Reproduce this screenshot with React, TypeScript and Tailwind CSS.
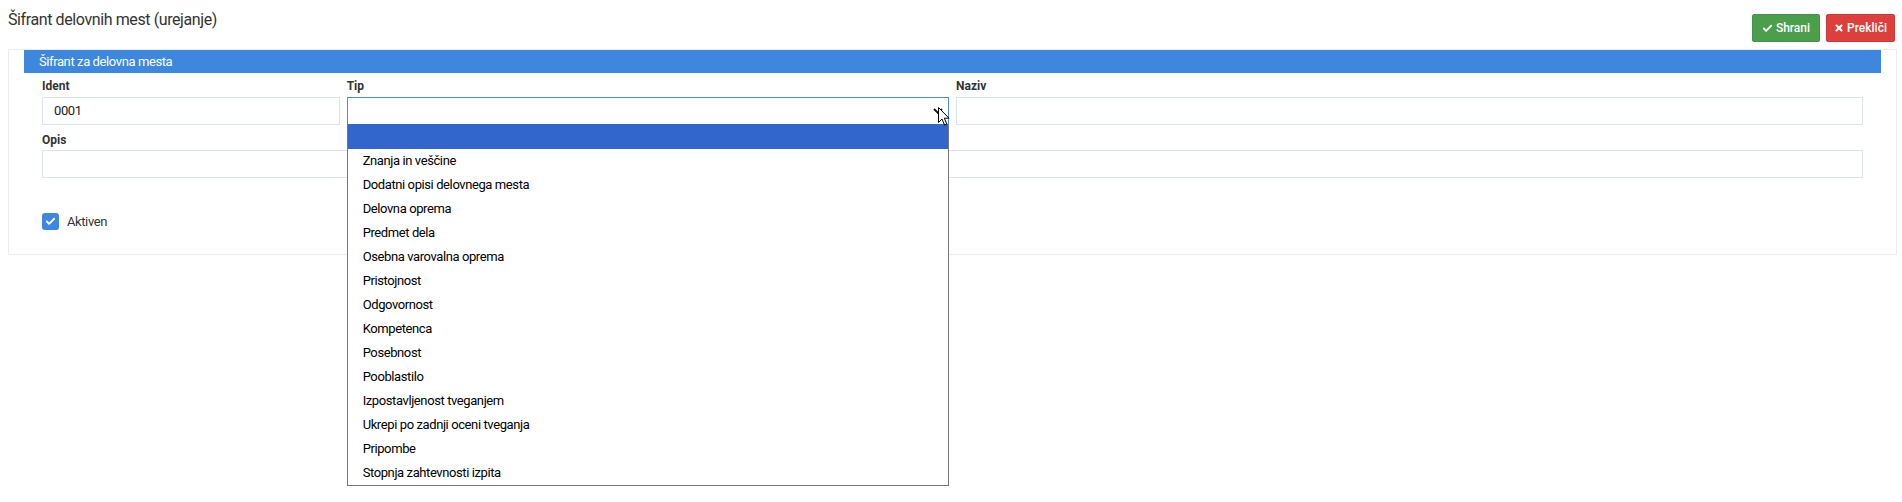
import { Check, X } from "lucide-react";

const options = [
  "Znanja in veščine",
  "Dodatni opisi delovnega mesta",
  "Delovna oprema",
  "Predmet dela",
  "Osebna varovalna oprema",
  "Pristojnost",
  "Odgovornost",
  "Kompetenca",
  "Posebnost",
  "Pooblastilo",
  "Izpostavljenost tveganjem",
  "Ukrepi po zadnji oceni tveganja",
  "Pripombe",
  "Stopnja zahtevnosti izpita",
];

const Label = ({ children, className = "" }: { children: React.ReactNode; className?: string }) => (
  <label className={`block text-[12px] leading-[16px] font-bold tracking-normal text-[#333] ${className}`}>{children}</label>
);

// mouse pointer hovering over the select arrow
const Pointer = () => (
  <svg width="12" height="19" viewBox="0 0 12 19" className="absolute left-[938px] top-[107px] z-30">
    <path d="M0.5 0.5 L0.5 15.5 L4 12 L6.5 18 L8.8 17 L6.3 11.2 L11 11.2 Z" fill="#fff" stroke="#000" strokeWidth="1" strokeLinejoin="round" />
  </svg>
);

const App = () => {
  return (
    <div className="relative w-[1902px] h-[502px] bg-white font-['Roboto',sans-serif] tracking-[-0.4px] text-[#333] overflow-hidden">
      {/* page heading + actions */}
      <div className="flex justify-between items-start pl-2 pr-[7px] pt-[10px]">
        <h1 className="text-[16px] leading-[20px] font-normal text-[#333]">Šifrant delovnih mest (urejanje)</h1>
        <div className="flex gap-[6px] mt-[4px]">
          <button className="h-[28px] px-[9px] flex items-center gap-[3px] bg-[#4b9e4a] border border-[#43914a] rounded-[2px] text-white text-[12px] font-medium tracking-normal">
            <Check className="w-[11px] h-[11px]" strokeWidth={4} />
            Shrani
          </button>
          <button className="h-[28px] px-[7px] flex items-center gap-[3px] bg-[#dd3f3c] border border-[#cf3835] rounded-[2px] text-white text-[12px] font-medium tracking-normal">
            <X className="w-[10px] h-[10px]" strokeWidth={5} />
            Prekliči
          </button>
        </div>
      </div>

      {/* card */}
      <div className="ml-2 mr-[5px] mt-[7px] border border-[#ececec] px-[15px] pb-[23px]">
        <div className="h-[23px] bg-[#3d88de] text-white text-[13px] leading-[23px] pl-[15px]">Šifrant za delovna mesta</div>

        <div className="px-[18px]">
          <div className="grid grid-cols-12 gap-x-[7px] mt-[5px]">
            <div className="col-span-2">
              <Label className="mb-[3px]">Ident</Label>
              <div className="h-[28px] border border-[#dde3ea] text-[13px] leading-[26px] pl-[11px] text-[#222]">0001</div>
            </div>
            <div className="col-span-4 relative">
              <Label className="mb-[3px]">Tip</Label>
              <div className="relative h-[28px] border border-[#4a8fd8]">
                <svg width="10" height="6" viewBox="0 0 10 6" className="absolute right-[5px] top-[10px]">
                  <path d="M1 1 L5 5 L9 1" fill="none" stroke="#111" strokeWidth="1.8" />
                </svg>
              </div>
              {/* open option list */}
              <ul className="absolute left-0 right-0 top-[46px] z-20 bg-white border-x border-b border-[#777] text-[13px] text-black">
                <li className="h-[25px] bg-[#3366cc]" />
                {options.map((o) => (
                  <li key={o} className="h-[24px] leading-[24px] pl-[15px]">
                    {o}
                  </li>
                ))}
              </ul>
            </div>
            <div className="col-span-6">
              <Label className="mb-[3px]">Naziv</Label>
              <div className="h-[28px] border border-[#dde3ea]" />
            </div>
          </div>

          <div className="mt-[7px]">
            <Label className="mb-[2px]">Opis</Label>
            <div className="h-[28px] border border-[#dde3ea]" />
          </div>

          <div className="flex items-center gap-[8px] mt-[34px]">
            <span className="w-[17px] h-[17px] rounded-[3px] bg-[#3d88de] flex items-center justify-center">
              <Check className="w-[11px] h-[11px] text-white" strokeWidth={4} />
            </span>
            <span className="text-[13px] leading-[19px] text-[#333]">Aktiven</span>
          </div>
        </div>
      </div>

      <Pointer />
    </div>
  );
};

export default App;
